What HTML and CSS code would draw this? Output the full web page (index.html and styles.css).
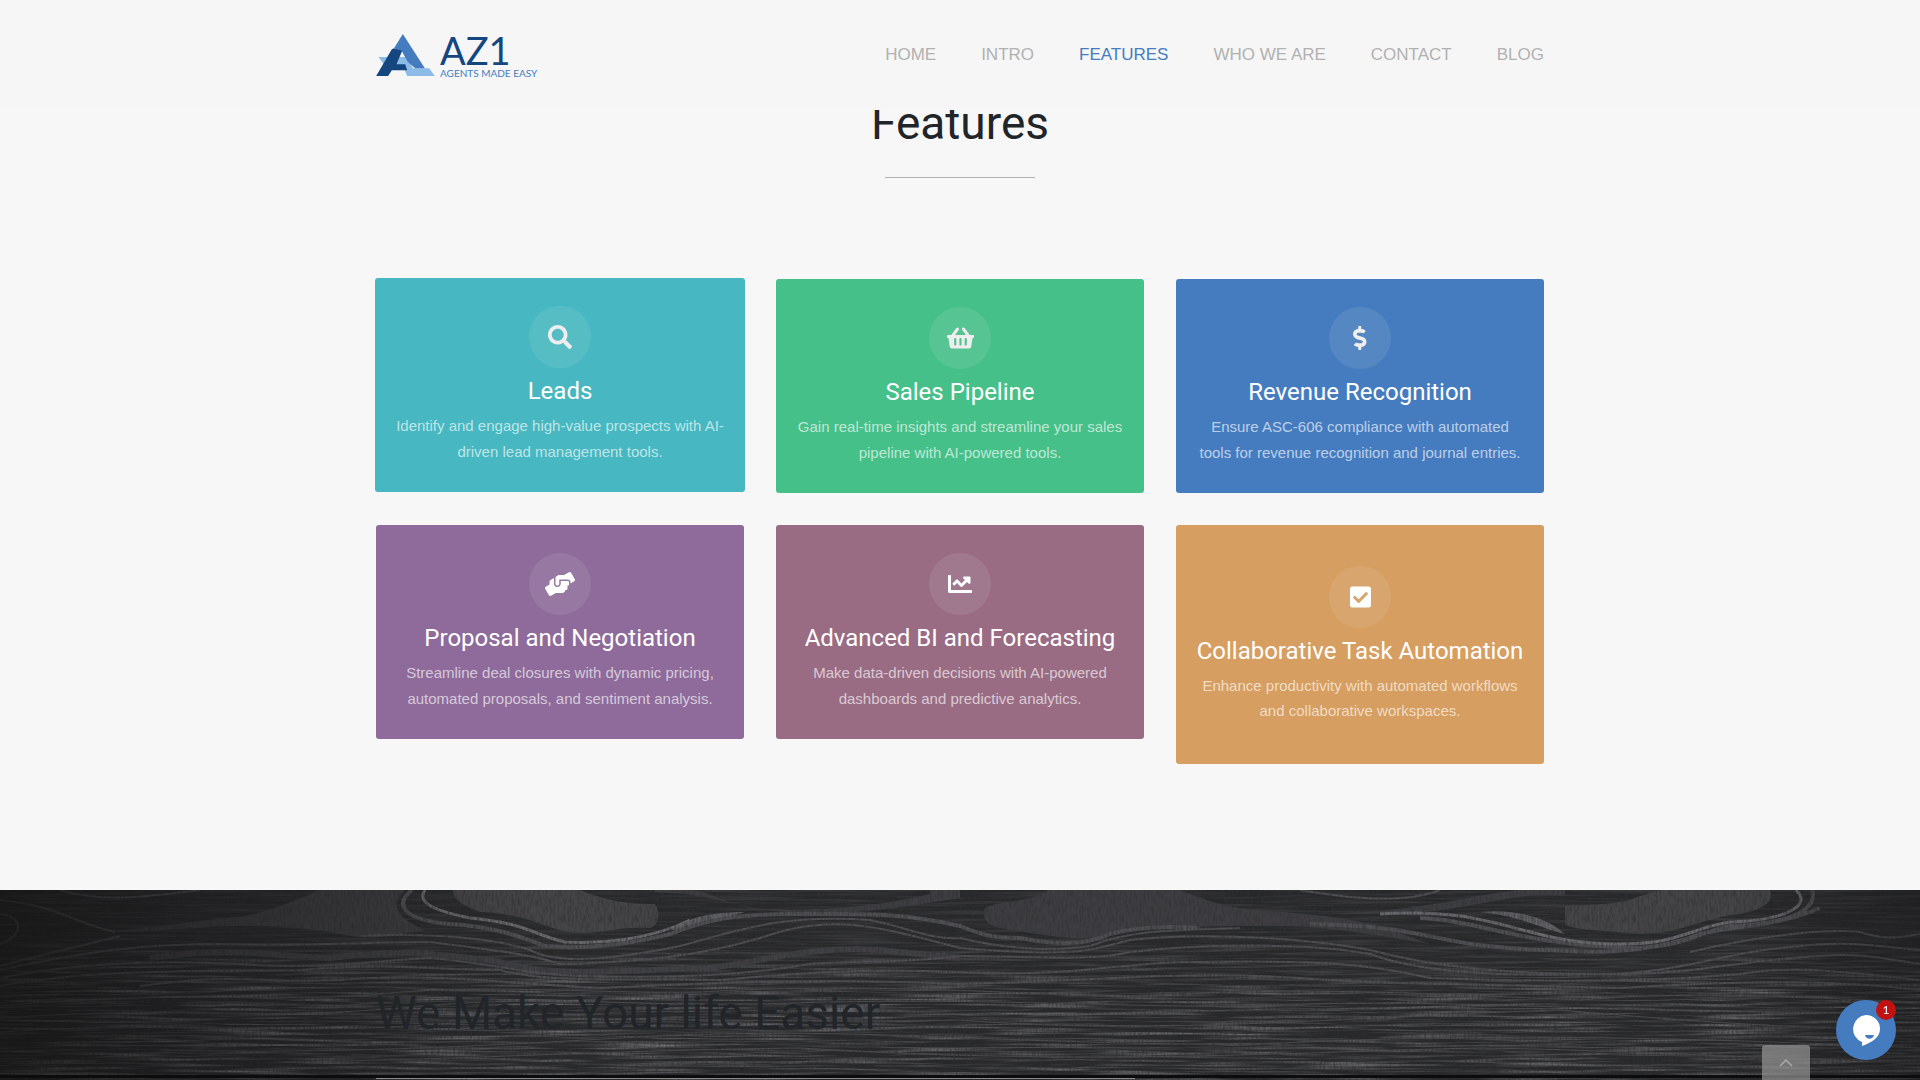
FILE: index.html
```html
<!DOCTYPE html>
<html lang="en">
<head>
<meta charset="utf-8">
<meta name="viewport" content="width=device-width, initial-scale=1">
<title>AZ1 - Agents Made Easy</title>
<link rel="stylesheet" href="styles.css">
</head>
<body>
<header class="site-header">
  <div class="container header-row">
    <a class="logo" href="#home" aria-label="AZ1 Agents Made Easy">
      <svg class="logo-mark" viewBox="0 0 176 126" aria-hidden="true">
        <path fill="#8bbbe6" d="M7 69H94L110 103H159L176 126H93L80 95H26Z"/>
        <path fill="#457cbf" d="M80 0 146 103H117L95 84 77 52 54 42Z"/>
        <path fill="#154680" d="M54 43 78 50 61 91H87L93 109H47L36 126H0L47 46Z"/>
      </svg>
      <span class="logo-words">
        <span class="logo-name">AZ1</span>
        <span class="logo-tag">AGENTS MADE EASY</span>
      </span>
    </a>
    <nav class="main-nav">
      <a href="#home">HOME</a>
      <a href="#intro">INTRO</a>
      <a class="active" href="#features">FEATURES</a>
      <a href="#who">WHO WE ARE</a>
      <a href="#contact">CONTACT</a>
      <a href="#blog">BLOG</a>
    </nav>
  </div>
</header>
<main>
  <section class="features" id="features">
    <div class="container">
      <h2 class="section-title">Features</h2>
      <hr class="title-rule">
      <div class="card-grid">
        <article class="card teal raised">
          <div class="icon"><svg viewBox="0 0 512 512"><path d="M505 442.7L405.3 343c-4.5-4.5-10.6-7-17-7H372c27.6-35.3 44-79.7 44-128C416 93.1 322.9 0 208 0S0 93.1 0 208s93.1 208 208 208c48.3 0 92.7-16.4 128-44v16.3c0 6.4 2.5 12.5 7 17l99.7 99.7c9.4 9.4 24.6 9.4 33.9 0l28.3-28.3c9.4-9.4 9.4-24.6.1-34zM208 336c-70.7 0-128-57.2-128-128 0-70.7 57.2-128 128-128 70.7 0 128 57.2 128 128 0 70.7-57.2 128-128 128z"/></svg></div>
          <h3>Leads</h3>
          <p>Identify and engage high-value prospects with AI-driven lead management tools.</p>
        </article>
        <article class="card green">
          <div class="icon"><svg viewBox="0 0 576 512"><path d="M576 216v16c0 13.255-10.745 24-24 24h-8l-26.113 182.788C514.509 462.435 494.257 480 470.37 480H105.63c-23.887 0-44.139-17.565-47.518-41.212L32 256h-8c-13.255 0-24-10.745-24-24v-16c0-13.255 10.745-24 24-24h67.341l106.78-146.821c10.395-14.292 30.407-17.453 44.701-7.058 14.293 10.395 17.453 30.408 7.058 44.701L170.477 192h235.046L326.12 82.821c-10.395-14.292-7.234-34.306 7.059-44.701 14.291-10.395 34.306-7.235 44.701 7.058L484.659 192H552c13.255 0 24 10.745 24 24zM312 392V280c0-13.255-10.745-24-24-24s-24 10.745-24 24v112c0 13.255 10.745 24 24 24s24-10.745 24-24zm112 0V280c0-13.255-10.745-24-24-24s-24 10.745-24 24v112c0 13.255 10.745 24 24 24s24-10.745 24-24zm-224 0V280c0-13.255-10.745-24-24-24s-24 10.745-24 24v112c0 13.255 10.745 24 24 24s24-10.745 24-24z"/></svg></div>
          <h3>Sales Pipeline</h3>
          <p>Gain real-time insights and streamline your sales pipeline with AI-powered tools.</p>
        </article>
        <article class="card blue">
          <div class="icon"><svg viewBox="0 0 288 512"><path d="M209.2 233.4l-108-31.6C88.7 198.2 80 186.5 80 173.5c0-16.3 13.2-29.5 29.5-29.5h66.3c12.2 0 24.2 3.7 34.2 10.5 6.1 4.1 14.3 3.1 19.5-2l34.8-34c7.1-6.9 6.1-18.4-1.8-24.5C238 74.8 207.4 64.1 176 64V16c0-8.8-7.2-16-16-16h-32c-8.8 0-16 7.2-16 16v48h-2.5C45.8 64-5.4 118.7.5 183.6c4.2 46.1 39.4 83.6 83.8 96.6l102.5 30c12.5 3.7 21.2 15.3 21.2 28.3 0 16.3-13.2 29.5-29.5 29.5h-66.3C100 368 88 364.3 78 357.5c-6.1-4.1-14.3-3.1-19.5 2l-34.8 34c-7.1 6.9-6.1 18.4 1.8 24.5 24.5 19.2 55.1 29.9 86.5 30v48c0 8.8 7.2 16 16 16h32c8.8 0 16-7.2 16-16v-48.2c46.6-.9 90.3-28.6 105.7-72.7 21.5-61.6-14.6-124.8-72.5-141.7z"/></svg></div>
          <h3>Revenue Recognition</h3>
          <p>Ensure ASC-606 compliance with automated tools for revenue recognition and journal entries.</p>
        </article>
        <article class="card purple bright">
          <div class="icon"><svg viewBox="0 0 640 512"><path d="M488 192H336v56c0 39.7-32.3 72-72 72s-72-32.3-72-72V126.4l-64.9 39C107.8 176.9 96 197.8 96 220.2v47.3l-80 46.2C.7 322.5-4.6 342.1 4.3 357.4l80 138.6c8.8 15.3 28.4 20.5 43.7 11.7L231.4 448H368c35.3 0 64-28.7 64-64h16c17.7 0 32-14.3 32-32v-64h8c13.3 0 24-10.7 24-24v-48c0-13.3-10.7-24-24-24zm147.7-37.4L555.7 16C546.9.7 527.3-4.5 512 4.3L408.6 64H306.4c-12 0-23.7 3.4-33.9 9.7L239 94.6c-9.4 5.8-15 16.1-15 27.1V248c0 22.1 17.9 40 40 40s40-17.9 40-40v-88h184c30.9 0 56 25.1 56 56v28.5l80-46.2c15.3-8.9 20.5-28.4 11.7-43.7z"/></svg></div>
          <h3>Proposal and Negotiation</h3>
          <p>Streamline deal closures with dynamic pricing, automated proposals, and sentiment analysis.</p>
        </article>
        <article class="card plum bright">
          <div class="icon"><svg viewBox="0 0 512 512"><path d="M496 384H64V80c0-8.84-7.16-16-16-16H16C7.16 64 0 71.16 0 80v336c0 17.67 14.33 32 32 32h464c8.84 0 16-7.16 16-16v-32c0-8.84-7.16-16-16-16zM464 96H345.94c-21.38 0-32.09 25.85-16.97 40.97l32.4 32.4L288 242.75l-73.37-73.37c-12.5-12.5-32.76-12.5-45.25 0l-68.69 68.69c-6.25 6.25-6.25 16.38 0 22.63l22.62 22.62c6.25 6.25 16.38 6.25 22.63 0L192 237.25l73.37 73.37c12.5 12.5 32.76 12.5 45.25 0l96-96 32.4 32.4c15.12 15.12 40.97 4.41 40.97-16.97V112c.01-8.84-7.15-16-15.99-16z"/></svg></div>
          <h3>Advanced BI and Forecasting</h3>
          <p>Make data-driven decisions with AI-powered dashboards and predictive analytics.</p>
        </article>
        <article class="card orange bright tall">
          <div class="icon"><svg viewBox="0 0 448 512"><path d="M400 480H48c-26.51 0-48-21.49-48-48V80c0-26.51 21.49-48 48-48h352c26.51 0 48 21.49 48 48v352c0 26.51-21.49 48-48 48zm-204.686-98.059l184-184c6.248-6.248 6.248-16.379 0-22.627l-22.627-22.627c-6.248-6.248-16.379-6.249-22.628 0L184 302.745l-70.059-70.059c-6.248-6.248-16.379-6.248-22.628 0l-22.627 22.627c-6.248 6.248-6.248 16.379 0 22.627l104 104c6.249 6.25 16.379 6.25 22.628.001z"/></svg></div>
          <h3>Collaborative Task Automation</h3>
          <p>Enhance productivity with automated workflows and collaborative workspaces.</p>
        </article>
      </div>
    </div>
  </section>
  <section class="story" id="who">
    <svg class="wood" viewBox="0 0 1920 190" preserveAspectRatio="xMidYMin slice" aria-hidden="true">
      <defs>
        <filter id="streaks" x="0" y="0" width="100%" height="100%">
          <feTurbulence type="fractalNoise" baseFrequency="0.01 0.35" numOctaves="4" seed="7"/>
          <feColorMatrix values="0 0 0 0 .4  0 0 0 0 .4  0 0 0 0 .42  2 0 0 0 -.85"/>
        </filter>
        <filter id="fibres" x="0" y="0" width="100%" height="100%">
          <feTurbulence type="fractalNoise" baseFrequency="0.5 0.12" numOctaves="3" seed="3"/>
          <feColorMatrix values="0 0 0 0 .03  0 0 0 0 .03  0 0 0 0 .03  2.4 0 0 0 -.9"/>
        </filter>
        <linearGradient id="shade">
          <stop offset="0" stop-color="#101010" stop-opacity=".7"/>
          <stop offset=".1" stop-color="#101010" stop-opacity=".4"/>
          <stop offset=".28" stop-color="#101010" stop-opacity="0"/>
          <stop offset=".9" stop-color="#101010" stop-opacity="0"/>
          <stop offset="1" stop-color="#101010" stop-opacity=".35"/>
        </linearGradient>
        <linearGradient id="fade" x2="0" y2="1">
          <stop offset=".25" stop-color="#fff" stop-opacity=".2"/>
          <stop offset=".6" stop-color="#fff" stop-opacity=".65"/>
          <stop offset="1" stop-color="#fff" stop-opacity=".6"/>
        </linearGradient>
        <mask id="lower"><rect width="1920" height="190" fill="url(#fade)"/></mask>
      </defs>
      <rect width="1920" height="190" fill="#27282a"/>
      <g mask="url(#lower)"><rect width="1920" height="190" filter="url(#streaks)"/></g>
      <g fill="#3e3e42">
        <path d="M104 42C150 38 200 30 245 26 275 20 300 8 320 0H405C385 18 405 32 425 40 400 44 380 50 350 46 310 38 290 36 240 36 200 36 160 42 130 42Z"/>
        <path fill="#454547" d="M453 0H580C600 8 620 14 655 14 660 22 660 34 650 38 620 36 600 44 575 43 545 40 535 25 480 22 462 16 452 8 453 0Z"/>
        <path d="M984 20C990 10 1030 14 1048 0H1180C1200 8 1215 14 1240 18 1280 22 1330 24 1370 34 1390 38 1400 44 1430 54 1380 46 1340 38 1290 36 1210 36 1150 36 1120 42 1090 56 1040 44 1000 38 984 34 984 28 984 20Z"/>
        <path fill="#454547" d="M1565 16C1590 14 1620 16 1640 6L1660 0H1770C1774 10 1768 18 1740 24 1700 28 1690 42 1640 44 1600 40 1570 40 1565 34Z"/>
        <path d="M655 0H690C710 0 730 18 765 20 820 20 870 18 930 4V0H960V8C900 18 860 22 830 24 760 24 730 12 700 6 680 2 670 4 655 2Z"/>
        <path d="M1300 24C1420 24 1460 6 1520 0H1565V5H1535C1500 8 1450 22 1400 24Z"/>
        <path d="M1480 22C1520 18 1550 30 1565 44 1540 38 1520 26 1480 22ZM672 40C690 26 715 22 745 22 715 30 700 36 685 40Z" fill="#606064"/>
      </g>
      <g fill="none" stroke="#505054" stroke-width="2">
        <path d="M60 0C100 12 140 8 200 0M0 10C60 16 70 32 115 42M0 24C24 26 24 46 0 54M0 76C60 60 90 54 120 46"/>
        <path stroke-width="4" d="M412 0C394 14 402 30 450 34 490 36 520 46 545 56 590 60 630 54 670 44 690 36 720 24 790 24 860 24 900 22 960 36 980 44 990 48 1020 48 1060 56 1090 54 1110 44 1140 36 1170 36 1200 38"/>
        <path stroke-width="3" stroke="#6a6a6e" d="M425 0C415 14 440 22 470 28 530 34 530 44 565 52 600 54 650 50 690 30"/>
        <path d="M360 46C440 42 500 50 530 60 560 76 620 68 680 56 740 40 780 24 870 30 910 38 930 50 960 48 1000 58 1050 62 1090 56 1130 40 1170 40 1240 38"/>
        <path d="M0 80C90 60 150 54 220 54 330 56 360 52 430 52 490 60 530 64 560 74 640 72 700 66 760 48 830 24 870 34 960 58"/>
        <path stroke-width="6" stroke="#414145" d="M150 68C230 56 270 66 330 68 400 60 430 62 500 72 550 88 620 80 710 78 770 70 810 56 880 60 910 64 930 64 960 68"/>
        <path d="M0 88C80 72 160 70 240 74 320 80 380 70 430 68 500 74 520 84 580 86 680 88 740 86 810 74 850 70 900 74 960 66"/>
        <path d="M960 58C1080 68 1090 60 1130 50 1180 44 1280 44 1370 60 1430 76 1500 84 1600 84 1680 84 1720 62 1800 56 1850 50 1890 58 1920 60"/>
        <path d="M960 66C1030 66 1090 72 1130 62 1210 52 1320 54 1370 64 1430 86 1520 86 1620 84 1700 84 1740 70 1820 66 1860 62 1890 70 1920 74"/>
        <path stroke-width="4" d="M1310 34C1440 36 1420 56 1550 60 1620 66 1670 56 1700 44 1720 38 1780 36 1820 18M1420 28C1480 30 1520 56 1640 58 1690 54 1700 42 1730 36 1790 34 1818 20 1812 0"/>
        <path stroke-width="3" stroke="#6a6a6e" d="M1380 24C1500 16 1520 54 1620 54 1680 54 1690 38 1730 32 1790 30 1812 14 1796 0"/>
        <path d="M1300 0C1380 14 1420 8 1440 0M1690 62C1750 48 1820 38 1860 42 1890 52 1905 46 1920 44"/>
        <path d="M0 96C100 78 200 82 300 80 400 72 430 80 500 80 550 94 640 88 720 90 790 84 850 78 960 82 1080 88 1130 70 1200 72 1320 70 1370 74 1430 88 1540 92 1650 92 1740 84 1800 74 1860 84 1920 90"/>
        <path d="M140 96C240 82 260 94 340 90 430 82 510 94 600 98 720 92 820 88 960 94 1080 92 1180 80 1300 88 1400 96 1500 94 1620 98 1720 92 1820 88 1920 100"/>
        <path d="M0 116C140 102 240 110 360 106 480 92 580 104 700 102 860 92 1000 104 1140 106 1300 96 1440 104 1580 110 1700 100 1800 108 1920 112M0 128C180 116 260 130 400 118 540 104 620 116 760 114 980 106 1100 118 1260 116 1460 106 1620 126 1920 122" stroke-width="1"/>
        <path d="M0 142C160 130 300 146 440 134 580 124 760 134 960 130 1160 146 1360 126 1560 120 1720 134 1800 138 1920 140M160 160C340 164 480 156 620 148 860 134 1000 156 1260 154 1500 142 1700 148 1920 158M300 172C500 168 620 160 800 158 1100 176 1280 162 1480 158 1640 160 1800 172 1920 170" stroke-width="1"/>
      </g>
      <rect width="1920" height="190" filter="url(#fibres)" opacity=".6"/>
      <rect width="1920" height="190" fill="url(#shade)"/>
      <rect y="185" width="1920" height="3" fill="#0c0c0d"/>
    </svg>
    <div class="container story-body">
      <h2 class="section-title">We Make Your life Easier</h2>
      <hr class="story-rule">
    </div>
  </section>
</main>
<button class="to-top" type="button" aria-label="Back to top">
  <svg viewBox="0 0 14 9"><path d="M1 8 7 2l6 6" fill="none" stroke="#aaa" stroke-width="1.5"/></svg>
</button>
<button class="chat" type="button" aria-label="Open chat">
  <svg viewBox="0 0 28 31"><path fill="#fff" d="M14 0a14 14 0 0 1 14 14c0 8-7 13-18 17v-4A14 14 0 0 1 14 0Z"/><path fill="#457cbf" d="M13 20h9c-1 5-8 5-9 0Z"/></svg>
  <span class="badge">1</span>
</button>
</body>
</html>
```
FILE: styles.css
```css
* { box-sizing: border-box; }

body {
  margin: 0;
  background: #f7f7f7;
  color: #212529;
  font-family: "Liberation Sans", Arial, sans-serif;
  font-size: 15px;
}

.container {
  width: 100%;
  max-width: 1200px;
  margin: 0 auto;
  padding: 0 16px;
}

.site-header {
  position: fixed;
  top: 0;
  left: 0;
  right: 0;
  z-index: 10;
  background: #f6f6f6;
}

.header-row {
  display: flex;
  align-items: center;
  justify-content: space-between;
  height: 110px;
}

.logo {
  display: flex;
  align-items: center;
  gap: 5px;
  color: #154680;
  font-family: Lato, sans-serif;
  text-decoration: none;
}

.logo-mark { width: 59px; height: 42px; }

.logo-words { display: flex; flex-direction: column; }

.logo-name { font-size: 38px; line-height: 36px; }

.logo-tag { color: #457cbf; font-size: 10px; line-height: 11px; }

.main-nav { display: flex; gap: 45px; }

.main-nav a {
  color: #b1b1b1;
  font-size: 17px;
  line-height: 24px;
  text-decoration: none;
}

.main-nav .active { color: #457cbf; }

.features { padding: 94px 0 126px; }

.section-title {
  margin: 0;
  font-family: Roboto, sans-serif;
  font-size: 46px;
  font-weight: 400;
  line-height: 58px;
}

.features .section-title { text-align: center; }

.title-rule {
  width: 150px;
  height: 1px;
  margin: 25px auto 101px;
  border: 0;
  background: #b1b1b1;
}

.card-grid {
  display: grid;
  grid-template-columns: repeat(3, 1fr);
  gap: 32px;
  align-items: start;
}

.card {
  padding: 28px 20px 27px;
  border-radius: 3px;
  color: #fff;
  text-align: center;
}

.card.tall { padding: 41px 20px; }

.card.raised { margin: -1px -1px 1px; }

.teal { background: #47b8c1; }
.green { background: #46c089; }
.blue { background: #457cbf; }
.purple { background: #8e6b9a; }
.plum { background: #996c84; }
.orange { background: #d69e60; }

.icon {
  display: flex;
  align-items: center;
  justify-content: center;
  width: 62px;
  height: 62px;
  margin: 0 auto;
  border-radius: 50%;
  background: rgba(238, 238, 238, .1);
  color: #eee;
}

.bright .icon { color: #fff; }

.icon svg { height: 24px; fill: currentColor; }

.card h3 {
  margin: 9px 0 7px;
  font-family: Roboto, sans-serif;
  font-size: 24px;
  font-weight: 400;
  line-height: 29px;
  white-space: nowrap;
}

.card p {
  margin: 0;
  color: rgba(255, 255, 255, .65);
  line-height: 26px;
}

.card.tall p { line-height: 25px; }

.story {
  position: relative;
  overflow: hidden;
  background: #242527;
}

.wood {
  position: absolute;
  inset: 0;
  width: 100%;
  height: 100%;
}

.story-body { position: relative; padding-top: 94px; padding-bottom: 1px; }

.story-rule {
  width: 65%;
  height: 1px;
  margin: 36px 0 0;
  border: 0;
  background: #8a8a8a;
}

.to-top {
  position: fixed;
  right: 110px;
  bottom: 0;
  width: 48px;
  height: 35px;
  padding: 0;
  border: 0;
  border-radius: 3px 3px 0 0;
  background: rgba(150, 150, 150, .7);
}

.to-top svg { width: 14px; height: 9px; }

.chat {
  position: fixed;
  right: 24px;
  bottom: 20px;
  display: flex;
  align-items: center;
  justify-content: center;
  width: 60px;
  height: 60px;
  padding: 0;
  border: 0;
  border-radius: 50%;
  background: #457cbf;
}

.chat svg { width: 28px; height: 31px; }

.badge {
  position: absolute;
  top: 0;
  right: 0;
  width: 20px;
  height: 20px;
  border-radius: 50%;
  background: #c11111;
  color: #fff;
  font-family: Lato, sans-serif;
  font-size: 12px;
  line-height: 19px;
}
```
